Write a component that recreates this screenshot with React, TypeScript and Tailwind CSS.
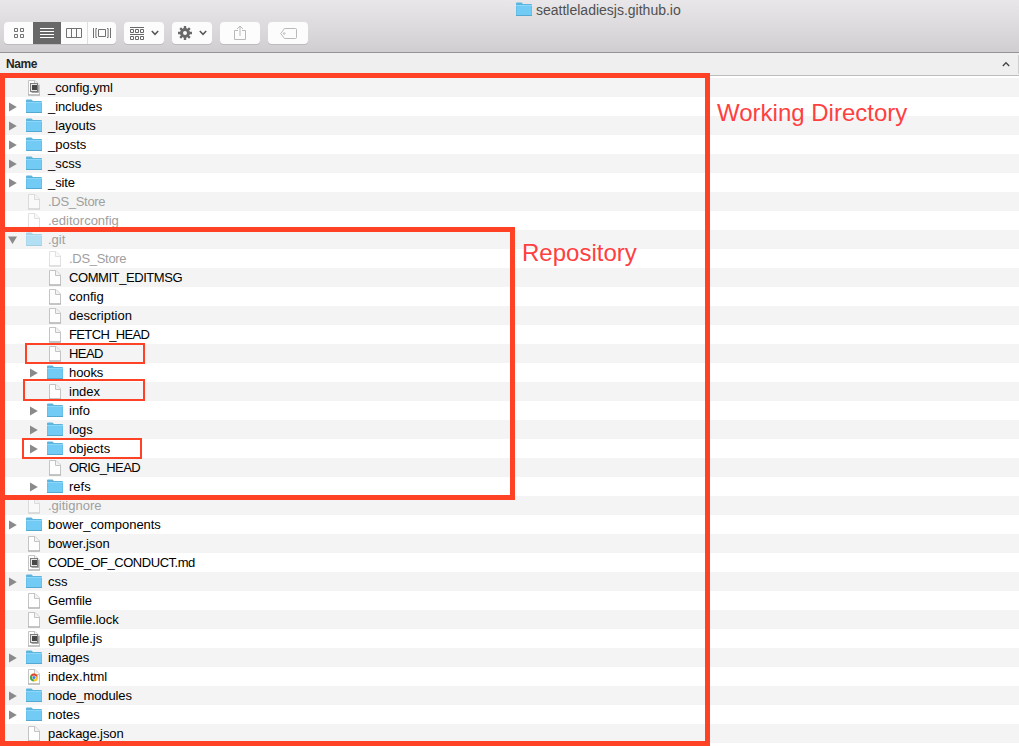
import React from "react";

type Kind = "folder" | "file" | "code" | "chrome";
type Row = { name: string; kind: Kind; depth?: number; open?: boolean; dim?: boolean; tracking?: string };

const rows: Row[] = [
  { name: "_config.yml", kind: "code", tracking: "tracking-[-0.08px]" },
  { name: "_includes", kind: "folder", tracking: "tracking-[-0.1px]" },
  { name: "_layouts", kind: "folder", tracking: "tracking-[-0.1px]" },
  { name: "_posts", kind: "folder" },
  { name: "_scss", kind: "folder" },
  { name: "_site", kind: "folder", tracking: "tracking-[-0.1px]" },
  { name: ".DS_Store", kind: "file", dim: true, tracking: "tracking-[-0.3px]" },
  { name: ".editorconfig", kind: "file", dim: true },
  { name: ".git", kind: "folder", open: true, dim: true },
  { name: ".DS_Store", kind: "file", depth: 1, dim: true, tracking: "tracking-[-0.3px]" },
  { name: "COMMIT_EDITMSG", kind: "file", depth: 1, tracking: "tracking-[-0.43px]" },
  { name: "config", kind: "file", depth: 1 },
  { name: "description", kind: "file", depth: 1 },
  { name: "FETCH_HEAD", kind: "file", depth: 1, tracking: "tracking-[-0.64px]" },
  { name: "HEAD", kind: "file", depth: 1, tracking: "tracking-[-0.55px]" },
  { name: "hooks", kind: "folder", depth: 1, tracking: "tracking-[-0.1px]" },
  { name: "index", kind: "file", depth: 1 },
  { name: "info", kind: "folder", depth: 1 },
  { name: "logs", kind: "folder", depth: 1 },
  { name: "objects", kind: "folder", depth: 1 },
  { name: "ORIG_HEAD", kind: "file", depth: 1, tracking: "tracking-[-0.62px]" },
  { name: "refs", kind: "folder", depth: 1 },
  { name: ".gitignore", kind: "file", dim: true },
  { name: "bower_components", kind: "folder", tracking: "tracking-[-0.04px]" },
  { name: "bower.json", kind: "file", tracking: "tracking-[-0.06px]" },
  { name: "CODE_OF_CONDUCT.md", kind: "code", tracking: "tracking-[-0.47px]" },
  { name: "css", kind: "folder" },
  { name: "Gemfile", kind: "file", tracking: "tracking-[-0.15px]" },
  { name: "Gemfile.lock", kind: "file", tracking: "tracking-[-0.08px]" },
  { name: "gulpfile.js", kind: "code" },
  { name: "images", kind: "folder", tracking: "tracking-[-0.15px]" },
  { name: "index.html", kind: "chrome" },
  { name: "node_modules", kind: "folder", tracking: "tracking-[-0.12px]" },
  { name: "notes", kind: "folder" },
  { name: "package.json", kind: "file", tracking: "tracking-[-0.08px]" },
];

function FolderIcon() {
  return (
    <svg width="16" height="15" viewBox="0 0 16 15" className="block shrink-0">
      <path d="M0 1.5Q0 .5 1 .5H5.5L7 2H15Q16 2 16 3V14H0Z" fill="#5db5dd" />
      <path d="M0.5 4H15.5V13H0.5Z" fill="#72cbf5" />
      <path d="M0 3.5H16" stroke="#8bd8fa" />
      <path d="M0 13.5H16" stroke="#55a8cf" />
    </svg>
  );
}

function DocIcon({ kind }: { kind: Kind }) {
  return (
    <svg width="16" height="16" viewBox="0 0 16 16" className="block shrink-0">
      <path d="M2.5 0.5H9L13.5 5V15H2.5Z" fill="#fefefe" stroke="#c4c4c4" />
      <path d="M8.5 0.5V5.5H13.5" fill="#f3f3f3" stroke="#c4c4c4" />
      <path d="M2 15H14" stroke="#a8a8a8" />
      {kind === "code" && (
        <>
          <path d="M5.5 12.5H12.5V5" fill="none" stroke="#a5a5a5" />
          <rect x="4.5" y="3.5" width="7" height="8" fill="#e8e8e8" stroke="#7d7d7d" />
          <rect x="6" y="5" width="5" height="5" fill="#484848" />
        </>
      )}
      {kind === "chrome" && (
        <>
          <circle cx="8" cy="8.5" r="4" fill="#f4c62b" />
          <path d="M8 8.5L4.5 6.5A4 4 0 0 1 11.6 6.9Z" fill="#dc4336" />
          <path d="M8 8.5L4.5 6.5A4 4 0 0 0 7.5 12.5Z" fill="#35a853" />
          <circle cx="8" cy="8.5" r="2" fill="#fff" />
          <circle cx="8" cy="8.5" r="1.5" fill="#437fdf" />
        </>
      )}
    </svg>
  );
}

function Disclosure({ open }: { open?: boolean }) {
  return (
    <svg width="10" height="10" viewBox="0 0 10 10" className="block">
      <path d={open ? "M0 1.5H9L4.5 9Z" : "M1 .5V9.5L8.8 5Z"} fill="#8a8a8a" />
    </svg>
  );
}

function FileRow({ row }: { row: Row }) {
  return (
    <div className={`flex h-[19px] items-center odd:bg-[#f4f4f4] even:bg-white ${row.depth ? "pl-[29px]" : "pl-2"}`}>
      <div className="w-[18px] shrink-0">{row.kind === "folder" && <Disclosure open={row.open} />}</div>
      <div className={row.dim ? "opacity-50" : ""}>
        {row.kind === "folder" ? <FolderIcon /> : <DocIcon kind={row.kind} />}
      </div>
      <span className={`ml-1.5 text-[13px] leading-[19px] whitespace-nowrap ${row.dim ? "text-[#a0a0a0]" : "text-black"} ${row.tracking ?? ""}`}>
        {row.name}
      </span>
    </div>
  );
}

const button = "flex h-[22px] items-center justify-center rounded-[4px] bg-[#fcfcfc] shadow-[0_1px_0_#bdbbbd]";

function Chevron() {
  return (
    <svg width="8" height="6" viewBox="0 0 8 6">
      <path d="M0.8 1L4 4.3L7.2 1" fill="none" stroke="#555" strokeWidth="1.5" />
    </svg>
  );
}

function Toolbar() {
  return (
    <div className="flex gap-2 pl-1">
      <div className="flex h-[22px] w-28 overflow-hidden rounded-[4px] bg-[#fcfcfc] shadow-[0_1px_0_#bdbbbd]">
        <div className="flex w-[29px] items-center pl-2.5">
          <svg width="10" height="10" viewBox="0 0 10 10" fill="none" stroke="#717171">
            <path d="M.5.5h3v3h-3zM6.5.5h3v3h-3zM.5 6.5h3v3h-3zM6.5 6.5h3v3h-3z" />
          </svg>
        </div>
        <div className="flex w-7 items-center justify-center bg-[#686868]">
          <svg width="14" height="10" viewBox="0 0 14 10" stroke="#fff">
            <path d="M0 .5h14M0 3.5h14M0 6.5h14M0 9.5h14" />
          </svg>
        </div>
        <div className="flex w-[26px] items-start justify-center pt-1.5">
          <svg width="16" height="10" viewBox="0 0 16 10" fill="none" stroke="#717171">
            <path d="M.5.5h15v9H.5zM5.5.5v9M10.5.5v9" />
          </svg>
        </div>
        <div className="flex w-[29px] items-start justify-center border-l border-[#dedede] pt-1.5">
          <svg width="18" height="10" viewBox="0 0 18 10" fill="none" stroke="#717171">
            <path d="M.5 0v10M17.5 0v10M5.5 1.5h7v7h-7zM4 .5H2.9V9.5H4M14 .5h1.1V9.5H14" />
          </svg>
        </div>
      </div>
      <div className={`${button} w-10 gap-[7px]`}>
        <svg width="14" height="14" viewBox="0 0 14 14" fill="none" stroke="#686868" className="mt-0.5">
          <path d="M0 .5h14M0 7.5h14M.5 2.5h3v3h-3zM5.5 2.5h3v3h-3zM10.5 2.5h3v3h-3zM.5 9.5h3v3h-3zM5.5 9.5h3v3h-3zM10.5 9.5h3v3h-3z" />
        </svg>
        <Chevron />
      </div>
      <div className={`${button} w-10 gap-[7px]`}>
        <svg width="14" height="14" viewBox="-7 -7 14 14" fill="none" stroke="#686868">
          <circle r="3.5" strokeWidth="3" />
          <path strokeWidth="2.4" d="M0-7V-4M0 7V4M-7 0H-4M7 0H4M-4.8-4.8L-3-3M4.8-4.8L3-3M-4.8 4.8L-3 3M4.8 4.8L3 3" />
        </svg>
        <Chevron />
      </div>
      <div className={`${button} w-10`}>
        <svg width="12" height="16" viewBox="0 0 12 16" fill="none" stroke="#b9b9b9">
          <path d="M4 5.5H.5v9h11v-9H8M6 11V1M3 4L6 1L9 4" />
        </svg>
      </div>
      <div className={`${button} w-10`}>
        <svg width="17" height="11" viewBox="0 0 17 11" fill="none" stroke="#b9b9b9">
          <path d="M4.5.5H15.5Q16.5.5 16.5 1.5V9.5Q16.5 10.5 15.5 10.5H4.5L.7 5.5Z" />
          <circle cx="4.2" cy="5.5" r=".8" />
        </svg>
      </div>
    </div>
  );
}

export default function App() {
  return (
    <div className="relative h-[746px] w-[1019px] overflow-hidden bg-white font-['Liberation_Sans',Arial,sans-serif]">
      <header className="flex h-[53px] flex-col border-b border-[#969396] bg-linear-to-b from-[#e9e7e9] to-[#d0ced0]">
        <div className="flex h-[22px] gap-1 pt-px pl-[516px]">
          <div className="pt-px">
            <FolderIcon />
          </div>
          <span className="text-[14px] leading-[18px] text-[#505050]">seattleladiesjs.github.io</span>
        </div>
        <Toolbar />
      </header>
      <div className="flex h-[23px] items-center justify-between border-b border-[#bdbdbd] bg-[#efefef] pl-1.5">
        <span className="text-[12px] font-bold leading-[22px] tracking-[-0.4px] text-[#262626]">Name</span>
        <div className="flex h-[19px] items-center border-r border-[#cfcfcf] pr-2">
          <svg width="8" height="6" viewBox="0 0 8 6">
            <path d="M0.8 5L4 1.7L7.2 5" fill="none" stroke="#444" strokeWidth="1.3" />
          </svg>
        </div>
      </div>
      <main className="pt-0.5">
        {rows.map((row, i) => (
          <FileRow key={i} row={row} />
        ))}
      </main>

      <div className="absolute top-[73px] left-0 h-[673px] w-[710px] border-5 border-[#ff4126]" />
      <div className="absolute top-[227px] left-0 h-[273px] w-[515px] border-5 border-[#ff4126]" />
      <div className="absolute top-[343px] left-[25px] h-[21px] w-[120px] border-2 border-[#ff4126]" />
      <div className="absolute top-[379px] left-[23px] h-[22px] w-[122px] border-2 border-[#ff4126]" />
      <div className="absolute top-[438px] left-[22px] h-[21px] w-[120px] border-2 border-[#ff4126]" />
      <span className="absolute top-[99px] left-[717px] text-2xl leading-7 whitespace-nowrap text-[#ff4040]">Working Directory</span>
      <span className="absolute top-[239px] left-[522px] text-2xl leading-7 whitespace-nowrap text-[#ff4040]">Repository</span>
    </div>
  );
}
